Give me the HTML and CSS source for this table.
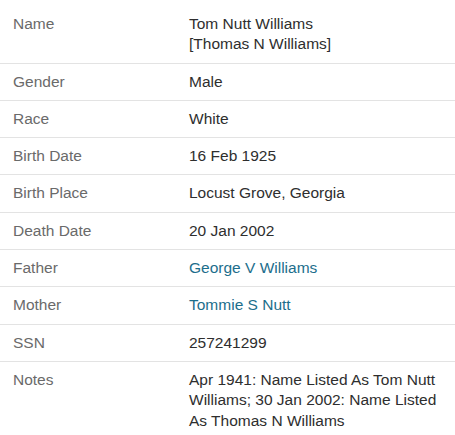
FILE: index.html
```html
<!DOCTYPE html>
<html lang="en">
<head>
<meta charset="utf-8">
<title>Record</title>
<link rel="stylesheet" href="styles.css">
</head>
<body>
<dl class="record">
  <div class="row"><dt class="label">Name</dt><dd class="value">Tom Nutt Williams<br>[Thomas N Williams]</dd></div>
  <div class="row"><dt class="label">Gender</dt><dd class="value">Male</dd></div>
  <div class="row"><dt class="label">Race</dt><dd class="value">White</dd></div>
  <div class="row"><dt class="label">Birth Date</dt><dd class="value">16 Feb 1925</dd></div>
  <div class="row"><dt class="label">Birth Place</dt><dd class="value">Locust Grove, Georgia</dd></div>
  <div class="row"><dt class="label">Death Date</dt><dd class="value">20 Jan 2002</dd></div>
  <div class="row"><dt class="label">Father</dt><dd class="value"><a class="link" href="#">George V Williams</a></dd></div>
  <div class="row"><dt class="label">Mother</dt><dd class="value"><a class="link" href="#">Tommie S Nutt</a></dd></div>
  <div class="row"><dt class="label">SSN</dt><dd class="value">257241299</dd></div>
  <div class="row last"><dt class="label">Notes</dt><dd class="value">Apr 1941: Name Listed As Tom Nutt Williams; 30 Jan 2002: Name Listed As Thomas N Williams</dd></div>
</dl>
</body>
</html>
```
FILE: styles.css
```css
html, body {
  margin: 0;
  padding: 0;
  background: #ffffff;
}
body {
  font-family: Arial, "Liberation Sans", Helvetica, sans-serif;
  font-size: 15.5px;
  line-height: 20.3px;
  color: #333333;
}
.record {
  margin: 0;
  padding: 6px 0 0;
  width: 455px;
}
.row {
  display: grid;
  grid-template-columns: 189px 1fr;
  padding: 8px 0;
  border-bottom: 1px solid #e3e3e3;
}
.row.last {
  border-bottom: none;
}
.label {
  margin: 0;
  padding-left: 13px;
  color: #6a6a6a;
}
.value {
  margin: 0;
  padding-right: 10px;
  color: #2e2e2e;
}
.link {
  color: #1c6e8c;
  text-decoration: none;
}
```
